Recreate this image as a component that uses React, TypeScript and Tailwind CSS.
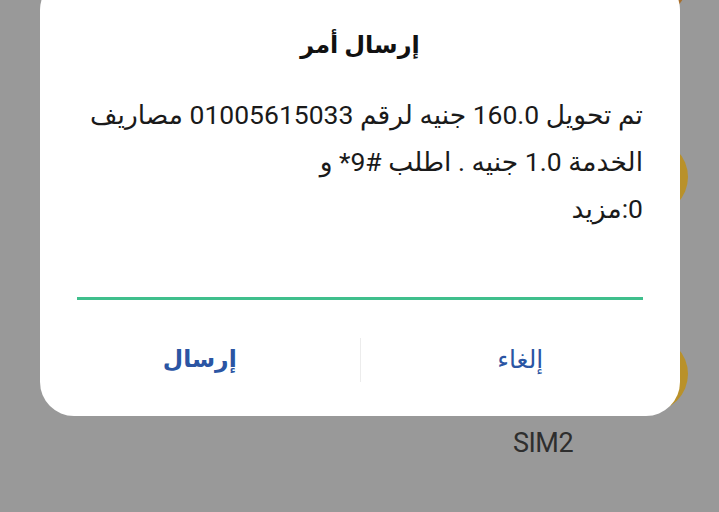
export default function App() {
  return (
    <main className="relative h-[512px] w-[719px] overflow-hidden bg-[#999999] font-['Roboto','DejaVu_Sans',sans-serif]">
      {/* page content behind the dialog */}
      <span className="absolute left-[612px] top-[-58px] h-[76px] w-[76px] rounded-full bg-[#a86f2c]" />
      <span className="absolute left-[612px] top-[139px] h-[76px] w-[76px] rounded-full bg-[#b9912a]" />
      <span className="absolute left-[612px] top-[336px] h-[76px] w-[76px] rounded-full bg-[#b9912a]" />
      <p className="absolute left-[513px] top-[427px] text-[27px] leading-[32px] tracking-[-0.5px] text-[#2e2e2e]">SIM2</p>

      {/* dialog */}
      <div dir="rtl" className="absolute left-[40px] top-[-24px] flex h-[440px] w-[640px] flex-col rounded-[34px] bg-white">
        <h1 className="mt-[51px] text-center text-[24px] font-bold leading-[36px] text-[#111]">إرسال أمر</h1>
        <div className="mt-[28px] pl-[20px] pr-[37px] text-[26.5px] leading-[47px] text-[#1a1a1a]">
          <p>تم تحويل 160.0 جنيه لرقم 01005615033 مصاريف الخدمة 1.0 جنيه . اطلب #9* و</p>
          <p>0:مزيد</p>
        </div>
        <div className="mx-[37px] mt-[65px] h-[3px] bg-[#3fbf8c]" />
        <div className="mt-[38px] flex h-[44px] items-center">
          <button className="flex-1 text-center text-[25px] text-[#2b55a3]">إلغاء</button>
          <span className="h-[44px] w-px bg-[#ececec]" />
          <button className="flex-1 text-center text-[23.5px] font-bold text-[#2b55a3]">إرسال</button>
        </div>
      </div>
    </main>
  );
}
